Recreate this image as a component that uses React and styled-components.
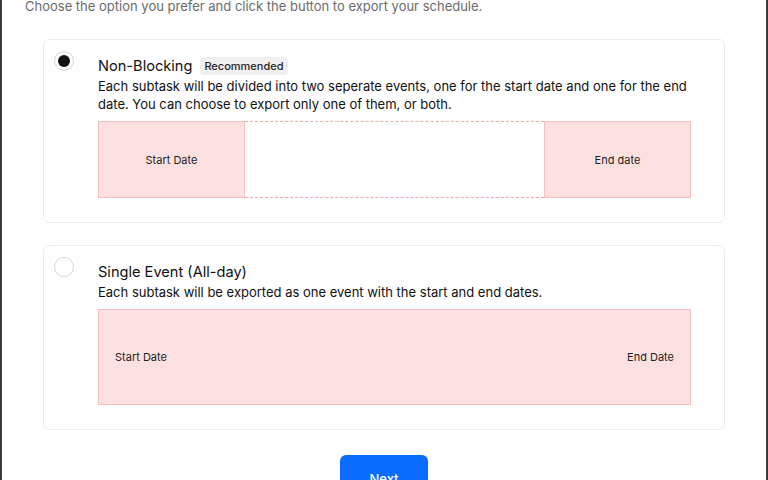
import React, { useState } from 'react';
import styled, { createGlobalStyle, css } from 'styled-components';

const GlobalStyle = createGlobalStyle`
    html, body {
        margin: 0;
        padding: 0;
        background: #ffffff;
        overflow: hidden;
    }
    body {
        font-family: Inter, "Noto Sans", sans-serif;
        color: #111827;
    }
`;

const options = [
    {
        id: 'non-blocking',
        title: 'Non-Blocking',
        badge: 'Recommended',
        lines: [
            'Each subtask will be divided into two seperate events, one for the start date and one for the end',
            'date. You can choose to export only one of them, or both.',
        ],
        type: 'split',
    },
    {
        id: 'single',
        title: 'Single Event (All-day)',
        lines: ['Each subtask will be exported as one event with the start and end dates.'],
        type: 'single',
    },
];

function App() {
    const [selected, setSelected] = useState('non-blocking');

    return (
        <>
            <GlobalStyle />
            <Frame>
                <Subtitle>Choose the option you prefer and click the button to export your schedule.</Subtitle>
                <List>
                    {options.map((option) => (
                        <Card key={option.id} onClick={() => setSelected(option.id)}>
                            <Radio checked={selected === option.id} />
                            <Body>
                                <TitleRow>
                                    <Title>{option.title}</Title>
                                    {option.badge && <Badge>{option.badge}</Badge>}
                                </TitleRow>
                                <Description>
                                    {option.lines.map((line) => (
                                        <div key={line}>{line}</div>
                                    ))}
                                </Description>
                                {option.type === 'split' ? (
                                    <SplitDiagram>
                                        <DateBox>Start Date</DateBox>
                                        <Gap />
                                        <DateBox>End date</DateBox>
                                    </SplitDiagram>
                                ) : (
                                    <SingleDiagram>
                                        <span>Start Date</span>
                                        <span>End Date</span>
                                    </SingleDiagram>
                                )}
                            </Body>
                        </Card>
                    ))}
                </List>
                <Footer>
                    <NextButton type="button">Next</NextButton>
                </Footer>
            </Frame>
        </>
    );
}

const Frame = styled.div`
    display: flow-root;
    box-sizing: border-box;
    min-height: 100vh;
    border-left: 2px solid #3b3b3b;
    border-right: 2px solid #3b3b3b;
    padding: 0 23px;
`;

const Subtitle = styled.p`
    margin: -4px 0 0;
    font-size: 13px;
    line-height: 20px;
    color: #6b6b6b;
`;

const List = styled.div`
    display: flex;
    flex-direction: column;
    gap: 22px;
    margin: 23px 18px 0;
`;

const Card = styled.div`
    display: flex;
    gap: 24px;
    padding: 11px 33px 24px 10px;
    border: 1px solid #ececec;
    border-radius: 6px;
    cursor: pointer;
`;

const Radio = styled.span`
    flex: none;
    box-sizing: border-box;
    width: 20px;
    height: 20px;
    border-radius: 50%;
    border: 1px solid #d4d4d8;
    background: #fff;
    position: relative;
    ${(props) =>
        props.checked &&
        css`
            &::after {
                content: '';
                position: absolute;
                inset: 3px;
                border-radius: 50%;
                background: #111111;
            }
        `}
`;

const Body = styled.div`
    flex: 1;
    min-width: 0;
`;

const TitleRow = styled.div`
    display: flex;
    align-items: center;
    gap: 8px;
    height: 20px;
    margin-top: 5px;
`;

const Title = styled.span`
    font-size: 14.6px;
    color: #111111;
`;

const Badge = styled.span`
    font-size: 11px;
    font-weight: 500;
    color: #27272a;
    background: #f0f0f0;
    border-radius: 4px;
    padding: 2px 4px;
    line-height: 14px;
`;

const Description = styled.div`
    margin-top: 1px;
    font-size: 13px;
    line-height: 18px;
    color: #111111;
`;

const SplitDiagram = styled.div`
    display: flex;
    height: 77px;
    margin-top: 8px;
`;

const DateBox = styled.div`
    box-sizing: border-box;
    width: 147px;
    flex: none;
    display: flex;
    align-items: center;
    justify-content: center;
    background: #fde0e0;
    border: 1px solid #f7c0c0;
    font-size: 11px;
    color: #1f1f1f;
`;

const Gap = styled.div`
    flex: 1;
    border-top: 1px dashed #f0a8a8;
    border-bottom: 1px dashed #f0a8a8;
`;

const SingleDiagram = styled.div`
    box-sizing: border-box;
    display: flex;
    align-items: center;
    justify-content: space-between;
    height: 96px;
    margin-top: 8px;
    padding: 0 16px;
    background: #fde0e0;
    border: 1px solid #f7c0c0;
    font-size: 11px;
    color: #1f1f1f;
`;

const Footer = styled.div`
    display: flex;
    justify-content: center;
    margin-top: 25px;
`;

const NextButton = styled.button`
    width: 88px;
    height: 48px;
    border: none;
    border-radius: 6px;
    background: #0a6cff;
    color: #ffffff;
    font-family: Inter, sans-serif;
    font-size: 13px;
    font-weight: 500;
`;

export default App;
